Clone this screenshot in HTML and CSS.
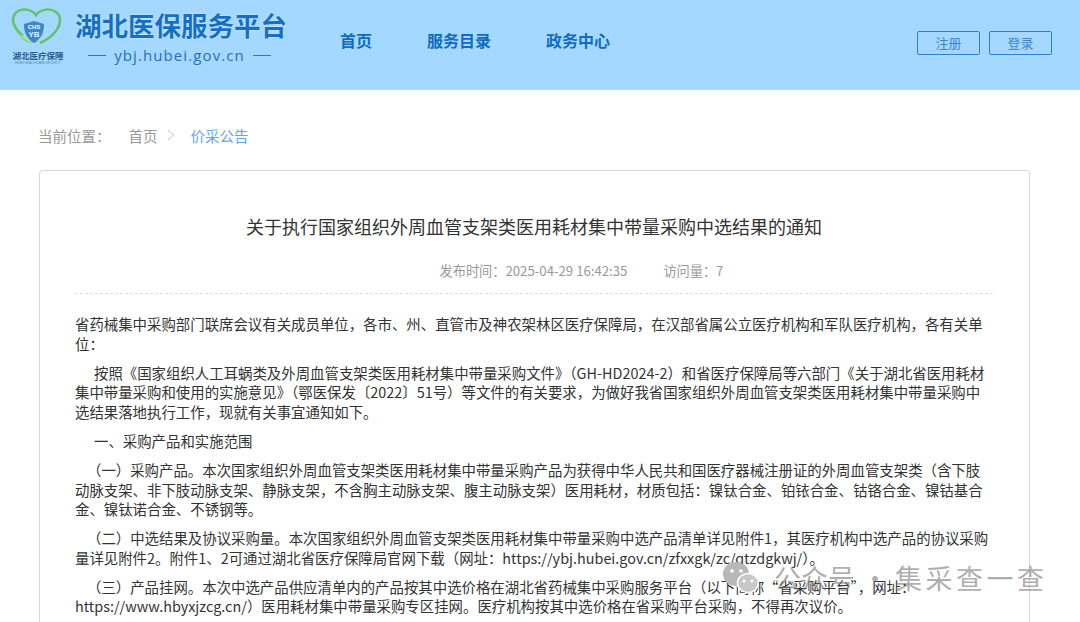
FILE: index.html
```html
<!DOCTYPE html>
<html>
  <head>
    <meta charset="UTF-8" />
    <title>关于执行国家组织外周血管支架类医用耗材集中带量采购中选结果的通知</title>
    <link rel="stylesheet" href="styles.css">
  </head>
  <body>
    <header class="top-bar">
      <div class="logo">
        <svg class="logo-mark" width="52" height="42" viewBox="0 0 52 42">
          <path d="M12 28C5 22 2 17 2 12C2 5 8 1 14 1.500C19 2 23 4 25 7C27 4 31 2 36 1.500C43 1 49 5 49 12C49 20 42 29 29 35" fill="none" stroke="#62c46c" stroke-width="2.600"/>
          <path d="M3 17C6 24 13 31 24 35C16 36 7 30 3 17Z" fill="#6fc47a"/>
          <path d="M8 26C14 29 20 33 31 32C26 35 24 36 20 34.500C15 32.500 11 30 8 26Z" fill="#a8e0a0"/>
          <path d="M23 13L33 16C33 25 30 31 23 35C16 31 13 25 13 16Z" fill="#3d86c8"/>
          <text x="23" y="21" class="logo-chs">CHS</text>
          <text x="23" y="29" class="logo-yb">YB</text>
        </svg>
        <div class="logo-name">湖北医疗保障</div>
        <div class="logo-en">HUBEI HEALTHCARE SECURITY</div>
      </div>
      <div class="brand">
        <div class="brand-title">湖北医保服务平台</div>
        <div class="brand-url"><i></i>ybj.hubei.gov.cn<i></i></div>
      </div>
      <nav class="nav">
        <a>首页</a>
        <a>服务目录</a>
        <a>政务中心</a>
      </nav>
      <div class="actions">
        <button>注册</button>
        <button>登录</button>
      </div>
    </header>

    <div class="crumbs">
      <span class="crumb-label">当前位置：</span>
      <span class="crumb-home">首页</span>
      <svg class="crumb-arrow" width="8" height="12" viewBox="0 0 8 12"><path d="M1 1L6.500 6L1 11" fill="none" stroke="#c0c0c0" stroke-width="1"/></svg>
      <span class="crumb-now">价采公告</span>
    </div>

    <main class="card">
      <h1>关于执行国家组织外周血管支架类医用耗材集中带量采购中选结果的通知</h1>
      <div class="meta">
        <span>发布时间：2025-04-29 16:42:35</span>
        <span>访问量：7</span>
      </div>
      <div class="content">
        <p class="flush">省药械集中采购部门联席会议有关成员单位，各市、州、直管市及神农架林区医疗保障局，在汉部省属公立医疗机构和军队医疗机构，各有关单位：</p>
        <p>按照《国家组织人工耳蜗类及外周血管支架类医用耗材集中带量采购文件》（GH-HD2024-2）和省医疗保障局等六部门《关于湖北省医用耗材集中带量采购和使用的实施意见》（鄂医保发〔2022〕51号）等文件的有关要求，为做好我省国家组织外周血管支架类医用耗材集中带量采购中选结果落地执行工作，现就有关事宜通知如下。</p>
        <p>一、采购产品和实施范围</p>
        <p class="sub">（一）采购产品。本次国家组织外周血管支架类医用耗材集中带量采购产品为获得中华人民共和国医疗器械注册证的外周血管支架类（含下肢动脉支架、非下肢动脉支架、静脉支架，不含胸主动脉支架、腹主动脉支架）医用耗材，材质包括：镍钛合金、铂铱合金、钴铬合金、镍钴基合金、镍钛诺合金、不锈钢等。</p>
        <p class="sub">（二）中选结果及协议采购量。本次国家组织外周血管支架类医用耗材集中带量采购中选产品清单详见附件1，其医疗机构中选产品的协议采购量详见附件2。附件1、2可通过湖北省医疗保障局官网下载（网址：https://ybj.hubei.gov.cn/zfxxgk/zc/qtzdgkwj/）。</p>
        <p class="sub">（三）产品挂网。本次中选产品供应清单内的产品按其中选价格在湖北省药械集中采购服务平台（以下简称“省采购平台”，网址：https://www.hbyxjzcg.cn/）医用耗材集中带量采购专区挂网。医疗机构按其中选价格在省采购平台采购，不得再次议价。</p>
      </div>
    </main>

    <div class="watermark">
      <svg width="36" height="32" viewBox="0 0 36 32">
        <ellipse cx="13" cy="12" rx="13" ry="12" fill="#b8b8b8"/>
        <ellipse cx="25" cy="21" rx="10.500" ry="9.500" fill="#c8c8c8" stroke="#fff" stroke-width="1.500"/>
        <circle cx="9" cy="9" r="1.800" fill="#fff"/>
        <circle cx="18" cy="9" r="1.800" fill="#fff"/>
        <circle cx="21" cy="19" r="1.500" fill="#fff"/>
        <circle cx="29" cy="19" r="1.500" fill="#fff"/>
      </svg>
      <span class="wm-a">公众号</span>
      <span class="wm-dot">·</span>
      <span class="wm-b">集采查一查</span>
    </div>
  </body>
</html>
```

FILE: styles.css
```css
html,
body {
  height: 622px;
  overflow: hidden;
}

body {
  margin: 0;
  font-family: "Noto Sans CJK SC", "Liberation Sans", sans-serif;
  background-color: #fff;
  color: #333;
  position: relative;
}

.top-bar {
  height: 90px;
  background-color: #a5d8ff;
  display: flex;
  box-sizing: border-box;
  padding-left: 11px;
}

.logo {
  width: 54px;
  padding-top: 8px;
  text-align: center;
}

.logo-mark {
  display: block;
}

.logo-chs {
  font: bold 6px "Liberation Sans", sans-serif;
  fill: #fff;
  text-anchor: middle;
}

.logo-yb {
  font: bold 8px "Liberation Sans", sans-serif;
  fill: #dff0ff;
  text-anchor: middle;
}

.logo-name {
  font-size: 8.500px;
  line-height: 11px;
  font-weight: 700;
  color: #2b5f8c;
  white-space: nowrap;
}

.logo-en {
  font: 3px/4px "Liberation Sans", sans-serif;
  color: #5c86a8;
  white-space: nowrap;
}

.brand {
  margin-left: 10px;
  padding-top: 6px;
  width: 212px;
}

.brand-title {
  font-size: 26.500px;
  line-height: 38px;
  font-weight: 700;
  color: #1570c4;
  white-space: nowrap;
  text-shadow: 0 0 2px #e8f6ff;
}

.brand-url {
  display: flex;
  align-items: center;
  justify-content: center;
  gap: 8px;
  margin-top: 1px;
  padding-right: 3px;
  font: 15px/20px "Open Sans", sans-serif;
  letter-spacing: 1.100px;
  color: #2470b8;
}

.brand-url i {
  width: 18px;
  height: 1px;
  background-color: #2f7cc4;
}

.nav {
  display: flex;
  gap: 55px;
  margin-left: 53px;
  padding-top: 28px;
}

.nav a {
  font-size: 16px;
  line-height: 24px;
  font-weight: 700;
  color: #0f6cc0;
}

.actions {
  display: flex;
  gap: 9px;
  margin-left: auto;
  padding: 31px 28px 0 0;
}

.actions button {
  width: 63px;
  height: 24px;
  padding: 0 0 2px;
  font-family: inherit;
  font-size: 13px;
  color: #3a86cc;
  background: none;
  border: 1px solid #2b80d0;
  border-radius: 2px;
}

.crumbs {
  display: flex;
  align-items: center;
  height: 20px;
  margin: 35px 0 0 38px;
  font-size: 14.500px;
  color: #999;
}

.crumb-home {
  margin-left: 18px;
}

.crumb-arrow {
  margin-left: 9px;
}

.crumb-now {
  margin-left: 16px;
  color: #5ea6f0;
}

.card {
  width: 991px;
  height: 600px;
  box-sizing: border-box;
  margin: 25px 0 0 39px;
  padding: 0 36px 0 35px;
  border: 1px solid #d8d8d8;
  border-radius: 4px;
}

h1 {
  margin: 40px 0 0;
  font-size: 18px;
  line-height: 30px;
  font-weight: 400;
  text-align: center;
  color: #333;
}

.meta {
  display: flex;
  justify-content: center;
  gap: 36px;
  height: 36px;
  margin-top: 16px;
  padding-left: 95px;
  border-bottom: 1px dashed #ddd;
  font-size: 13.200px;
  line-height: 28px;
  color: #999;
}

.content {
  margin-top: 20px;
  font-size: 14.420px;
  line-height: 19.500px;
  color: #333;
}

.content p {
  margin: 0 0 9.700px;
  text-indent: 19px;
}

.content p.flush {
  text-indent: 0;
}

.content p.sub {
  text-indent: 12px;
}

.watermark {
  position: absolute;
  left: 723px;
  top: 558px;
  display: flex;
  align-items: center;
  font-size: 27px;
  line-height: 40px;
  color: rgba(120, 120, 120, 0.6);
  white-space: nowrap;
}

.wm-a {
  margin-left: 15px;
}

.wm-dot {
  width: 40px;
  text-align: center;
}

.wm-b {
  letter-spacing: 3.500px;
}
```
